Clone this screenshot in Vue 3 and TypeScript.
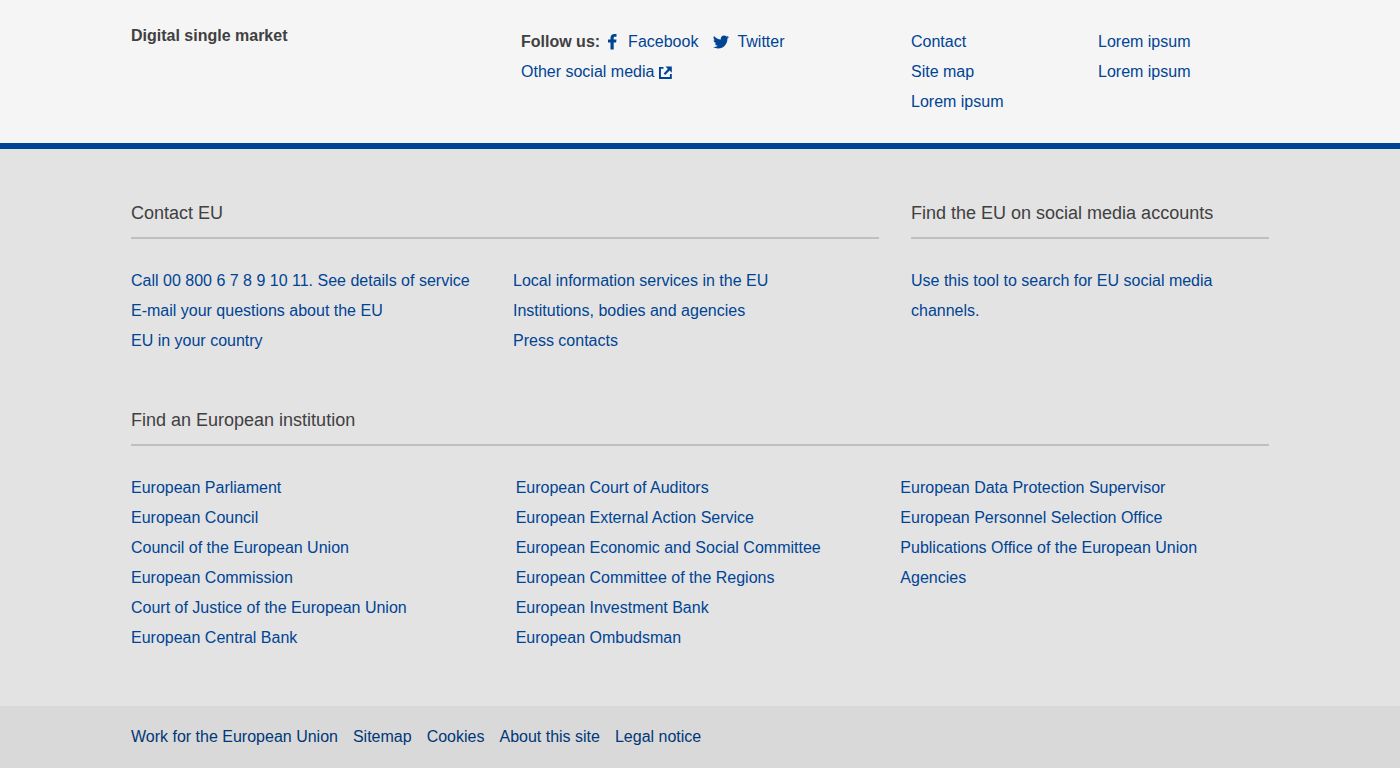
<script setup lang="ts">
const siteLinks: string[][] = [
  ['Contact', 'Site map', 'Lorem ipsum'],
  ['Lorem ipsum', 'Lorem ipsum'],
]

const contactLinks: string[][] = [
  ['Call 00 800 6 7 8 9 10 11. See details of service', 'E-mail your questions about the EU', 'EU in your country'],
  ['Local information services in the EU', 'Institutions, bodies and agencies', 'Press contacts'],
]

const institutions: string[][] = [
  [
    'European Parliament',
    'European Council',
    'Council of the European Union',
    'European Commission',
    'Court of Justice of the European Union',
    'European Central Bank',
  ],
  [
    'European Court of Auditors',
    'European External Action Service',
    'European Economic and Social Committee',
    'European Committee of the Regions',
    'European Investment Bank',
    'European Ombudsman',
  ],
  [
    'European Data Protection Supervisor',
    'European Personnel Selection Office',
    'Publications Office of the European Union',
    'Agencies',
  ],
]

const legalLinks: string[] = ['Work for the European Union', 'Sitemap', 'Cookies', 'About this site', 'Legal notice']
</script>

<template>
  <footer class="footer">
    <div class="site">
      <div class="container thirds">
        <h4 class="site-title">Digital single market</h4>
        <div class="follow">
          <div class="follow-row">
            <span class="label">Follow us:</span>
            <a href="#" class="social">
              <svg class="icon" width="16" height="16" viewBox="0 0 16 16" aria-hidden="true">
                <path d="M6.500 15.500V8.500H4V5.500h2.500V4C6.500 1.400 8 0 10.400 0c1 0 1.700.1 2.100.1v2.700h-1.300C10 2.800 9.700 3.300 9.700 4.200v1.300h2.800l-.4 3H9.700v7z" />
              </svg>
              <span>Facebook</span>
            </a>
            <a href="#" class="social">
              <svg class="icon" width="16" height="16" viewBox="0 0 16 16" aria-hidden="true">
                <path d="M16 3.040a6.600 6.600 0 0 1-1.890.52 3.300 3.300 0 0 0 1.450-1.820 6.600 6.600 0 0 1-2.080.8 3.280 3.280 0 0 0-5.600 3A9.320 9.320 0 0 1 1.110 2.100a3.280 3.280 0 0 0 1.020 4.380 3.270 3.270 0 0 1-1.490-.4v.04a3.280 3.280 0 0 0 2.640 3.220 3.300 3.300 0 0 1-1.490.05 3.290 3.290 0 0 0 3.070 2.280A6.590 6.590 0 0 1 0 13.030a9.290 9.290 0 0 0 5.030 1.470c6.040 0 9.340-5 9.340-9.330v-.43A6.700 6.700 0 0 0 16 3.040z" />
              </svg>
              <span>Twitter</span>
            </a>
          </div>
          <a href="#" class="other">
            <span>Other social media</span>
            <svg class="icon" width="14" height="14" viewBox="0 0 14 14" aria-hidden="true">
              <path d="M1 2h4.500v1.700H2.900v8.400h9V9h1.900v5H1z" />
              <path d="M7.500 1.500h6.300v6.300l-2.200-2.200L7.200 10 5.700 8.500l4.200-4.600z" />
            </svg>
          </a>
        </div>
        <div class="site-links">
          <ul v-for="(column, i) in siteLinks" :key="i">
            <li v-for="(link, j) in column" :key="j"><a href="#">{{ link }}</a></li>
          </ul>
        </div>
      </div>
    </div>

    <div class="union">
      <div class="container thirds">
        <section class="contact">
          <h4 class="heading">Contact EU</h4>
          <div class="contact-columns">
            <ul v-for="(column, i) in contactLinks" :key="i">
              <li v-for="link in column" :key="link"><a href="#">{{ link }}</a></li>
            </ul>
          </div>
        </section>
        <section>
          <h4 class="heading">Find the EU on social media accounts</h4>
          <a href="#">Use this tool to search for EU social media channels.</a>
        </section>
      </div>
      <section class="container institutions">
        <h4 class="heading">Find an European institution</h4>
        <div class="institution-columns">
          <ul v-for="(column, i) in institutions" :key="i">
            <li v-for="link in column" :key="link"><a href="#">{{ link }}</a></li>
          </ul>
        </div>
      </section>
    </div>

    <div class="legal">
      <ul class="container legal-list">
        <li v-for="link in legalLinks" :key="link"><a href="#">{{ link }}</a></li>
      </ul>
    </div>
  </footer>
</template>

<style>
body {
  margin: 0;
  background: #d9d9d9;
}
</style>

<style scoped>
.footer {
  font-family: 'Liberation Sans', Arial, sans-serif;
  font-size: 16px;
  line-height: 30px;
  color: #404040;
}

a {
  color: #004494;
  text-decoration: none;
}

a:hover {
  text-decoration: underline;
}

ul {
  margin: 0;
  padding: 0;
  list-style: none;
}

.container {
  box-sizing: border-box;
  max-width: 1170px;
  margin: 0 auto;
  padding: 0 16px;
}

.thirds {
  display: grid;
  grid-template-columns: repeat(3, minmax(0, 1fr));
  column-gap: 32px;
}

.site {
  padding: 27px 0 26px;
  background: #f5f5f5;
  border-bottom: 6px solid #004494;
}

.site-title {
  margin: 0;
  font-size: 16px;
  line-height: 18px;
}

.follow-row,
.social,
.other {
  display: flex;
  align-items: center;
}

.label {
  margin-right: 4px;
  font-weight: bold;
}

.social {
  gap: 8px;
  margin-right: 15px;
}

.other {
  gap: 4px;
}

.icon {
  flex: none;
  fill: #004494;
}

.site-links {
  display: grid;
  grid-template-columns: 1fr 1fr;
  column-gap: 16px;
}

.union {
  padding: 49px 0 53px;
  background: #e3e3e3;
}

.contact {
  grid-column: span 2;
}

.heading {
  margin: 0 0 27px;
  padding-bottom: 9px;
  border-bottom: 2px solid #bfbfbf;
  font-size: 18px;
  font-weight: normal;
}

.contact-columns {
  display: grid;
  grid-template-columns: 1fr 1fr;
  column-gap: 16px;
}

.institutions {
  margin-top: 49px;
}

.institution-columns {
  display: grid;
  grid-template-columns: repeat(3, minmax(0, 1fr));
  column-gap: 16px;
}

.legal {
  padding: 16px 0;
  background: #d9d9d9;
}

.legal-list {
  display: flex;
  flex-wrap: wrap;
  column-gap: 15px;
}

.legal-list a {
  color: #003776;
}
</style>
